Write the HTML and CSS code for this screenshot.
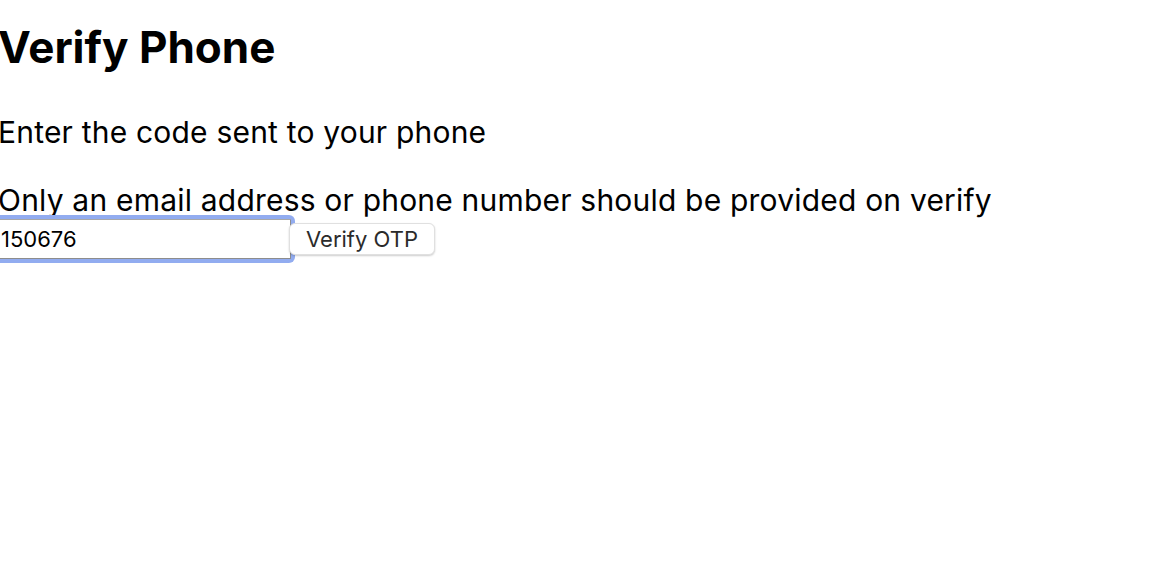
FILE: index.html
```html
<!DOCTYPE html>
<html lang="en">
<head>
<meta charset="utf-8">
<title>Verify Phone</title>
<link rel="stylesheet" href="styles.css">
</head>
<body>
<main class="page">
  <h1 class="title">Verify Phone</h1>
  <p class="lead">Enter the code sent to your phone</p>
  <p class="error">Only an email address or phone number should be provided on verify</p>
  <form class="otp-form">
    <span class="focus-ring"><input class="otp-input" type="text" value="150676"></span>
    <button class="otp-button" type="button">Verify OTP</button>
  </form>
</main>
</body>
</html>
```

FILE: styles.css
```css
html, body {
  margin: 0;
  padding: 0;
  background: #ffffff;
}

body {
  font-family: Inter, "Noto Sans", sans-serif;
  color: #000000;
}

.page {
  margin-left: -2px;
}

.title {
  margin: 21px 0 0 0;
  font-size: 44px;
  line-height: 52px;
  font-weight: 700;
  letter-spacing: 0;
}

.lead {
  margin: 41px 0 0 0;
  font-size: 30px;
  line-height: 36px;
  letter-spacing: 0.2px;
}

.error {
  margin: 32px 0 0 0;
  font-size: 30px;
  line-height: 36px;
  letter-spacing: 0.2px;
}

.otp-form {
  display: flex;
  align-items: center;
  margin-top: -3px;
}

.focus-ring {
  display: flex;
  margin-left: -4px;
  padding: 4px;
  border-radius: 6px;
  background: #92acf0;
}

.otp-input {
  box-sizing: border-box;
  width: 293px;
  height: 40px;
  margin: 0;
  padding: 0 0 0 2px;
  border: 1px solid #8d8d8d;
  border-top-color: #a8a8a8;
  border-left-color: #a8a8a8;
  border-radius: 1px;
  font-family: Inter, "Noto Sans", sans-serif;
  font-size: 22px;
  color: #000000;
  background: #ffffff;
  outline: none;
}

.otp-button {
  box-sizing: border-box;
  height: 32px;
  margin: 0 0 0 -6px;
  padding: 0 16px;
  border: 1px solid #e0e0e0;
  border-radius: 6px;
  background: #ffffff;
  box-shadow: 0 1px 2px rgba(0, 0, 0, 0.2);
  font-family: Inter, "Noto Sans", sans-serif;
  font-size: 22px;
  color: #2b2b2b;
  position: relative;
}
```
